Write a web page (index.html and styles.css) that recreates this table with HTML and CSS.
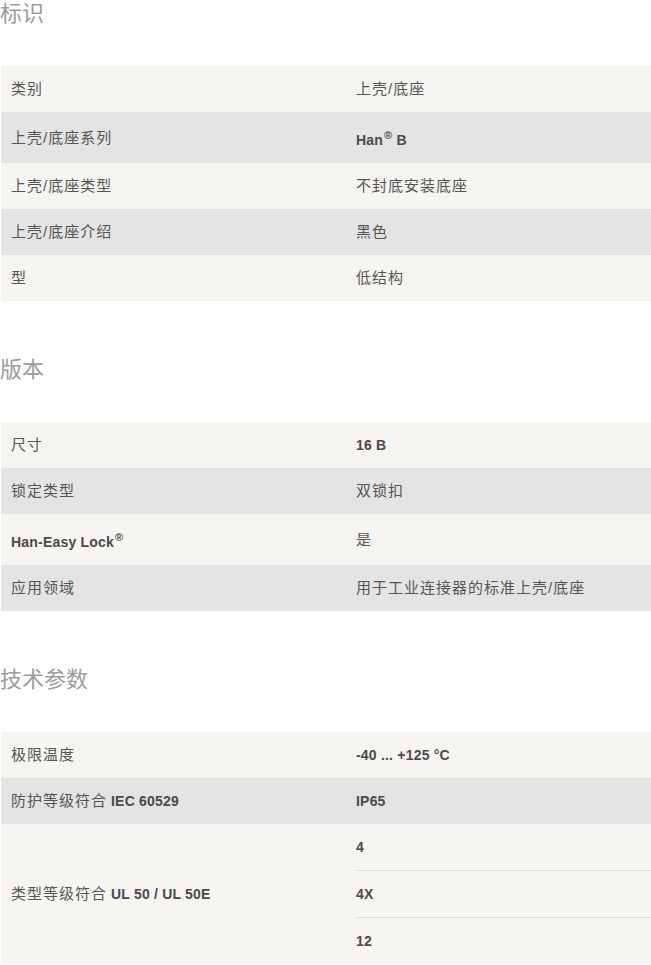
FILE: index.html
```html
<!DOCTYPE html>
<html lang="zh-CN">
<head>
<meta charset="utf-8">
<title>规格</title>
<link rel="stylesheet" href="styles.css">
</head>
<body>
<div class="page">
  <section class="spec">
    <h2 class="spec-title">标识</h2>
    <div class="spec-table">
      <div class="spec-row"><div class="spec-label">类别</div><div class="spec-value">上壳/底座</div></div>
      <div class="spec-row"><div class="spec-label">上壳/底座系列</div><div class="spec-value"><span class="en">Han<sup class="reg">®</sup> B</span></div></div>
      <div class="spec-row"><div class="spec-label">上壳/底座类型</div><div class="spec-value">不封底安装底座</div></div>
      <div class="spec-row"><div class="spec-label">上壳/底座介绍</div><div class="spec-value">黑色</div></div>
      <div class="spec-row"><div class="spec-label">型</div><div class="spec-value">低结构</div></div>
    </div>
  </section>

  <section class="spec">
    <h2 class="spec-title">版本</h2>
    <div class="spec-table">
      <div class="spec-row"><div class="spec-label">尺寸</div><div class="spec-value"><span class="en">16 B</span></div></div>
      <div class="spec-row"><div class="spec-label">锁定类型</div><div class="spec-value">双锁扣</div></div>
      <div class="spec-row"><div class="spec-label"><span class="en">Han-Easy Lock<sup class="reg">®</sup></span></div><div class="spec-value">是</div></div>
      <div class="spec-row"><div class="spec-label">应用领域</div><div class="spec-value">用于工业连接器的标准上壳/底座</div></div>
    </div>
  </section>

  <section class="spec">
    <h2 class="spec-title">技术参数</h2>
    <div class="spec-table">
      <div class="spec-row"><div class="spec-label">极限温度</div><div class="spec-value"><span class="en">-40 ... +125 °C</span></div></div>
      <div class="spec-row"><div class="spec-label">防护等级符合<span class="en gap">IEC 60529</span></div><div class="spec-value"><span class="en">IP65</span></div></div>
      <div class="spec-row"><div class="spec-label">类型等级符合<span class="en gap">UL 50 / UL 50E</span></div>
        <div class="spec-value multi">
          <div class="multi-item"><span class="en">4</span></div>
          <div class="multi-item"><span class="en">4X</span></div>
          <div class="multi-item"><span class="en">12</span></div>
        </div>
      </div>
    </div>
  </section>
</div>
</body>
</html>
```

FILE: styles.css
```css
html, body {
  margin: 0;
  padding: 0;
  background: #ffffff;
}

body {
  font-family: "Liberation Sans", "Noto Sans CJK SC", sans-serif;
  font-size: 14px;
  color: #555555;
}

.page {
  padding: 2px 0 0 1px;
}

.spec + .spec {
  margin-top: 57px;
}

.spec-title {
  margin: 0 0 40px -1px;
  font-size: 22px;
  line-height: 24px;
  font-weight: normal;
  color: #9c9c9c;
}

.spec-table {
  display: flex;
  flex-direction: column;
}

.spec-row {
  display: grid;
  grid-template-columns: 345px 1fr;
  background: #f6f5f2;
}

.spec-row:nth-child(even) {
  background: #e4e4e4;
}

.spec-label,
.spec-value {
  padding: 14px 10px;
  font-size: 15px;
  line-height: 18px;
  letter-spacing: 1px;
  align-self: center;
}

.spec-value.multi {
  padding: 0 0 0 10px;
  align-self: stretch;
}

.multi-item {
  padding: 14px 0;
  line-height: 18px;
}

.multi-item + .multi-item {
  border-top: 1px solid #dcdcdc;
}

.en {
  font-size: 14px;
  font-weight: bold;
  color: #4a4a4a;
  letter-spacing: 0.2px;
}

.en.gap {
  margin-left: 4px;
}

.reg {
  font-size: 11px;
  line-height: 18px;
  vertical-align: 6px;
  margin-left: 1px;
}
```
